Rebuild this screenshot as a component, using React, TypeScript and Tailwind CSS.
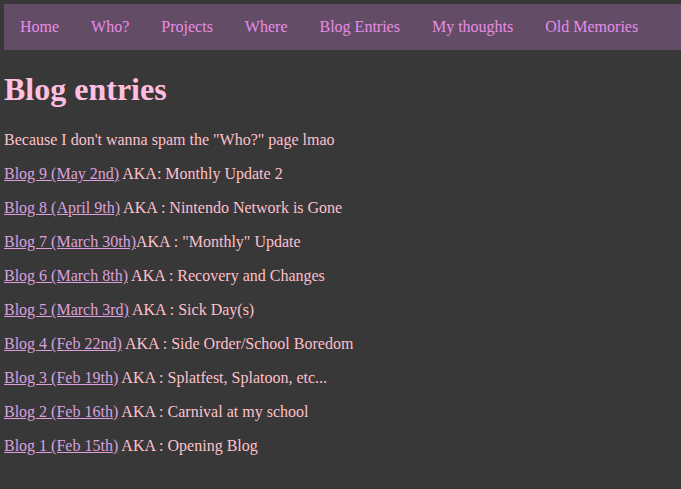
import React from "react";

const navItems = [
  "Home",
  "Who?",
  "Projects",
  "Where",
  "Blog Entries",
  "My thoughts",
  "Old Memories",
];

const entries = [
  { link: "Blog 9 (May 2nd)", title: " AKA: Monthly Update 2" },
  { link: "Blog 8 (April 9th)", title: " AKA : Nintendo Network is Gone" },
  { link: "Blog 7 (March 30th)", title: "AKA : \"Monthly\" Update" },
  { link: "Blog 6 (March 8th)", title: " AKA : Recovery and Changes" },
  { link: "Blog 5 (March 3rd)", title: " AKA : Sick Day(s)" },
  { link: "Blog 4 (Feb 22nd)", title: " AKA : Side Order/School Boredom" },
  { link: "Blog 3 (Feb 19th)", title: " AKA : Splatfest, Splatoon, etc..." },
  { link: "Blog 2 (Feb 16th)", title: " AKA : Carnival at my school" },
  { link: "Blog 1 (Feb 15th)", title: " AKA : Opening Blog" },
];

const App = () => {
  return (
    <div className="min-h-screen bg-[#383838] pl-1 pt-1 pb-4 font-['Liberation_Serif',serif] text-base text-[#ffc0cb]">
      <nav className="flex bg-[#634c65]">
        {navItems.map((item) => (
          <a
            key={item}
            href="#"
            className="px-4 py-[14px] leading-[18px] text-[#e88ce8]"
          >
            {item}
          </a>
        ))}
      </nav>
      <h1 className="mt-[21px] mb-[23px] text-[32px] font-bold leading-[37px] text-[#ffc0e0]">
        Blog entries
      </h1>
      <p className="mb-4 leading-[18px]">
        Because I don't wanna spam the "Who?" page lmao
      </p>
      {entries.map((entry) => (
        <p key={entry.link} className="mb-4 leading-[18px]">
          <a href="#" className="text-[#dda0dd] underline">
            {entry.link}
          </a>
          {entry.title}
        </p>
      ))}
    </div>
  );
};

export default App;
